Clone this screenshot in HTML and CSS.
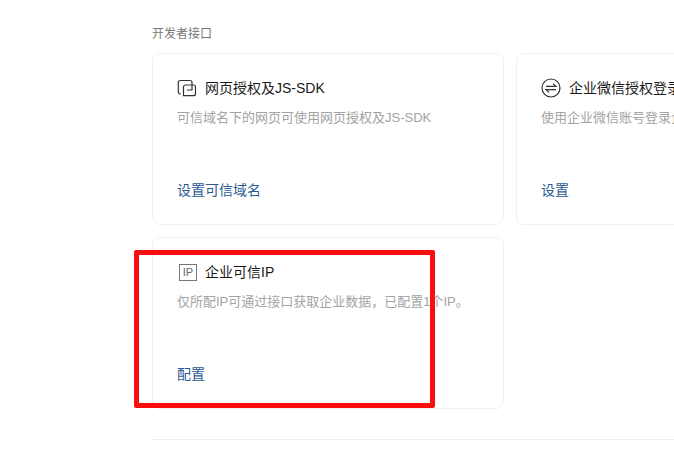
FILE: index.html
```html
<!DOCTYPE html>
<html lang="zh-CN">
<head>
<meta charset="utf-8">
<title>开发者接口</title>
<link rel="stylesheet" href="styles.css">
</head>
<body>
<main class="page">
  <h2 class="section-label">开发者接口</h2>
  <div class="card-grid">
    <section class="card">
      <div class="card-head">
        <svg class="icon" width="20" height="20" viewBox="0 0 20 20" fill="none" stroke="#333" stroke-width="1.200">
          <path d="M4 16H3.300a2 2 0 0 1-2-2V4.500a2 2 0 0 1 2-2H13a2 2 0 0 1 2 2V12H10"/>
          <path d="M6.500 17.700V9a2 2 0 0 1 2-2h8a2 2 0 0 1 2 2v6.700a2 2 0 0 1-2 2Z"/>
        </svg>
        <h3 class="card-title">网页授权及JS-SDK</h3>
      </div>
      <p class="card-desc">可信域名下的网页可使用网页授权及JS-SDK</p>
      <a class="card-link">设置可信域名</a>
    </section>
    <section class="card">
      <div class="card-head">
        <svg class="icon" width="20" height="20" viewBox="0 0 20 20" fill="none" stroke="#333" stroke-width="1.200">
          <circle cx="10" cy="10" r="9"/>
          <path d="M5 8.300h10L12 5.600"/>
          <path d="M15 11.700H5l3 2.700"/>
        </svg>
        <h3 class="card-title">企业微信授权登录</h3>
      </div>
      <p class="card-desc">使用企业微信账号登录企业网站或应用</p>
      <a class="card-link">设置</a>
    </section>
    <section class="card">
      <div class="card-head">
        <span class="ip-icon">IP</span>
        <h3 class="card-title">企业可信IP</h3>
      </div>
      <p class="card-desc">仅所配IP可通过接口获取企业数据，已配置1个IP。</p>
      <a class="card-link">配置</a>
    </section>
  </div>
  <hr class="divider">
</main>
<div class="annotation"></div>
</body>
</html>
```
FILE: styles.css
```css
html, body {
  margin: 0;
  height: 449px;
  overflow: hidden;
  background: #fff;
}
body {
  font-family: "Liberation Sans", "Noto Sans CJK SC", sans-serif;
  position: relative;
}
.page {
  padding: 26px 0 0 152px;
  width: 900px;
}
.section-label {
  margin: 0 0 11px;
  font-size: 12px;
  line-height: 16px;
  font-weight: 400;
  color: #787878;
}
.card-grid {
  display: grid;
  grid-template-columns: 352px 352px;
  grid-auto-rows: 172px;
  gap: 12px;
}
.card {
  box-sizing: border-box;
  border: 1px solid #f0f0f0;
  border-radius: 8px;
  padding: 23px 24px 24px;
  display: flex;
  flex-direction: column;
}
.card-head {
  display: flex;
  align-items: center;
  height: 22px;
  gap: 8px;
}
.icon {
  flex: none;
}
.ip-icon {
  box-sizing: border-box;
  flex: none;
  width: 18px;
  height: 17px;
  margin-left: 2px;
  border: 1px solid #777;
  font-size: 11px;
  line-height: 15px;
  text-align: center;
  color: #666;
}
.card-title {
  margin: 0;
  font-size: 14px;
  line-height: 22px;
  font-weight: 400;
  color: #1a1a1a;
}
.card-desc {
  margin: 10px 0 0;
  font-size: 13px;
  line-height: 18px;
  color: #a3a3a3;
  white-space: nowrap;
}
.card-link {
  margin-top: auto;
  font-size: 14px;
  line-height: 20px;
  color: #2b5a94;
}
.divider {
  margin: 30px 0 0;
  border: 0;
  border-top: 1px solid #eee;
}
.annotation {
  position: absolute;
  left: 134px;
  top: 250px;
  width: 301px;
  height: 158px;
  box-sizing: border-box;
  border: 5px solid #f80e0e;
  border-radius: 2px;
}
```
